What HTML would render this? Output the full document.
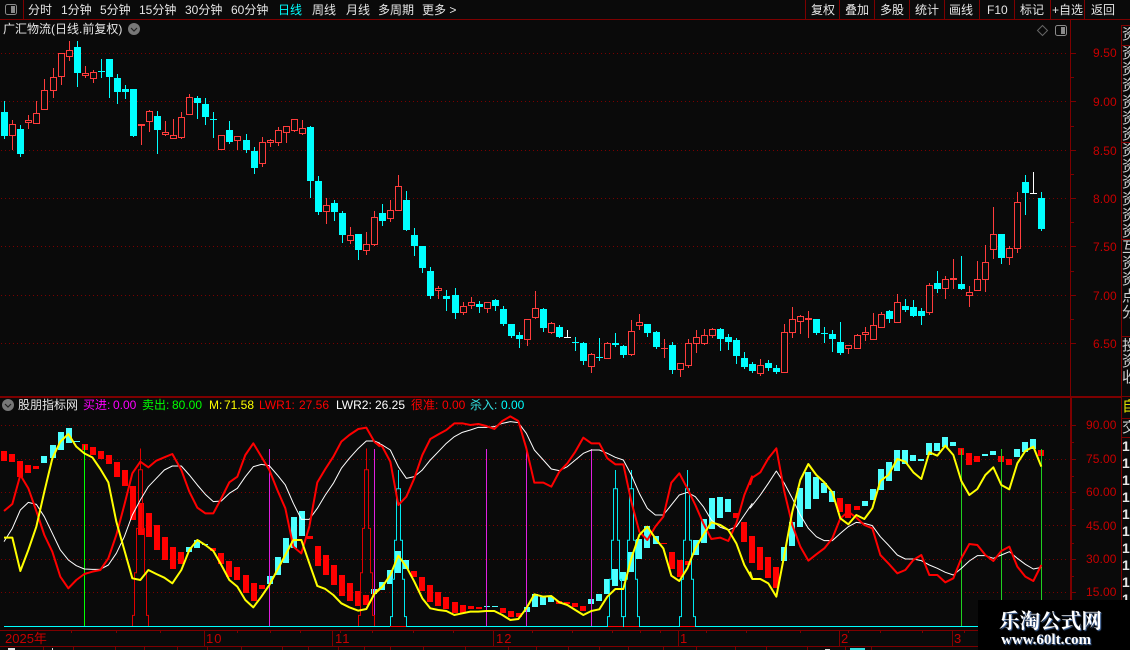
<!DOCTYPE html>
<html><head><meta charset="utf-8"><style>
html,body{margin:0;padding:0;background:#0a0a0a}
#p{position:relative;width:1130px;height:650px;overflow:hidden;background:#0a0a0a;font-family:"Liberation Sans","WenQuanYi Zen Hei","Noto Sans CJK SC",sans-serif;font-size:12px;color:#e6e6e6}
.t{position:absolute;white-space:nowrap;line-height:14px}
.a{position:absolute;white-space:nowrap;line-height:14px;left:1093px;width:30px;text-align:left;color:#c80000;font-size:12px;letter-spacing:.1px}
.l{position:absolute;background:#7d0000}
svg{position:absolute;left:0;top:0}
.s{position:absolute;left:1122px;width:8px;overflow:hidden;font-size:15px;line-height:16.2px;color:#cfcfcf;white-space:nowrap}
</style></head><body><div id="p">
<svg id="g" width="1130" height="650" viewBox="0 0 1130 650" xmlns="http://www.w3.org/2000/svg"></svg>

<svg width="1130" height="650" viewBox="0 0 1130 650" xmlns="http://www.w3.org/2000/svg" style="pointer-events:none">
<defs><clipPath id="c"><rect x="0" y="398" width="1069" height="229"/></clipPath></defs>
<g clip-path="url(#c)"><g fill="none" stroke-linejoin="round">
<g transform="translate(0,395) scale(.33333)">
<polyline stroke="#fff" stroke-width="3" points="12,440 37,400 61,345 85,322 109,328 133,365 157,415 181,465 205,495 229,512 253,522 277,523 301,523 325,510 349,475 373,425 397,360 421,315 445,275 469,250 493,225 517,213 544,213 568,240 592,270 616,298 640,320 664,318 688,295 712,280 736,245 760,215 784,208 808,212 832,240 856,270 880,325 904,373 928,373 952,340 976,300 1000,265 1024,220 1048,190 1075,160 1099,138 1123,138 1140,145"/>
<polyline stroke="#f00" stroke-width="6" points="12,348 37,327 61,240 85,280 109,348 133,420 157,470 181,545 205,580 229,555 253,537 277,530 301,525 325,490 349,420 373,330 397,235 421,200 445,217 469,197 493,187 517,177 544,225 568,290 592,338 616,355 640,355 664,310 688,262 712,245 736,180 760,145 784,185 808,225 832,285 856,340 880,455 904,475 928,395 952,262 976,222 1000,185 1024,140 1048,120 1075,102 1099,98 1123,140 1140,155"/>
<polyline stroke="#ff0" stroke-width="6" points="12,428 37,428 61,528 85,465 109,395 133,290 157,190 181,140 205,117 229,155 253,175 277,187 301,222 325,262 349,380 373,465 397,550 421,555 445,525 469,537 493,548 517,565 544,525 568,465 592,435 616,450 640,468 664,510 688,555 712,575 736,615 760,637 784,605 808,570 832,525 856,480 880,435 904,435 928,505 952,573 976,582 1000,600 1024,625 1048,637 1075,647 1099,642 1123,597 1140,582"/>
</g>
<g transform="translate(375,395) scale(.33333)">
<polyline stroke="#fff" stroke-width="3" points="0,140 22,150 46,165 70,215 94,250 118,245 142,225 166,195 190,170 214,145 238,125 262,112 286,105 310,97 334,97 358,95 382,85 406,80 430,83 454,115 478,165 505,195 529,222 553,227 577,215 601,195 625,175 649,165 673,165 697,175 721,187 745,195 769,240 793,295 817,340 841,360 865,360 889,330 913,300 937,292 961,305 985,335 1009,375 1036,397 1060,405 1084,395 1108,360 1132,325"/>
<polyline stroke="#f00" stroke-width="6" points="0,142 22,155 46,200 70,330 94,305 118,250 142,180 166,132 190,118 214,105 238,85 262,85 286,90 310,87 334,93 358,102 382,78 406,64 430,78 454,160 478,263 505,263 529,275 553,230 577,205 601,170 625,128 649,145 673,145 697,190 721,208 745,208 769,320 793,410 817,435 841,395 865,365 889,263 913,235 937,280 961,330 985,385 1009,432 1036,428 1060,438 1084,385 1108,300 1132,242"/>
<polyline stroke="#ff0" stroke-width="6" points="0,592 22,575 46,540 70,482 94,515 118,560 142,610 166,640 190,645 214,648 238,660 262,655 286,650 310,650 334,648 358,648 382,660 406,675 430,672 454,640 478,598 505,605 529,603 553,622 577,630 601,645 625,660 649,648 673,643 697,605 721,582 745,582 769,490 793,420 817,395 841,430 865,460 889,542 913,558 937,520 961,460 985,420 1009,382 1036,390 1060,405 1084,445 1108,510 1132,552"/>
</g>
<g transform="translate(750,395) scale(.33333)">
<polyline stroke="#fff" stroke-width="3" points="0,340 31,300 55,265 79,228 103,265 127,310 151,360 175,400 199,425 223,437 247,437 271,415 295,395 319,382 343,385 367,392 391,425 415,450 442,480 466,492 490,492 514,497 538,510 562,520 586,532 610,540 634,520 658,498 682,482 706,482 730,490 754,480 778,470 802,490 826,508 850,522 874,517"/>
<polyline stroke="#f00" stroke-width="6" points="0,270 7,248 31,232 55,190 79,160 103,290 127,390 151,455 175,497 199,478 223,460 247,430 271,370 295,350 319,368 343,390 367,400 391,480 415,505 442,535 466,525 490,495 514,480 538,540 562,540 586,562 610,550 634,490 658,447 682,450 706,480 730,498 754,468 778,455 802,515 826,545 850,558 874,510"/>
<polyline stroke="#ff0" stroke-width="6" points="0,530 7,552 31,552 55,565 79,605 103,480 127,350 151,255 175,207 199,240 223,262 247,292 271,370 295,388 319,360 343,372 367,340 391,258 415,240 442,192 466,200 490,232 514,252 538,172 562,182 586,152 610,180 634,258 658,300 682,282 706,240 730,217 754,270 778,283 802,205 826,168 850,155 874,215"/>
</g>
</g></g>
<!-- icons -->
<rect x="5.5" y="4.5" width="11" height="10" rx="2" fill="none" stroke="#8a8a8a"/><rect x="11" y="6" width="4" height="7" fill="#8a8a8a"/>
<circle cx="134" cy="29" r="6" fill="#777"/><path d="M131 28l3 3 3-3" fill="none" stroke="#222" stroke-width="1.2"/>
<circle cx="8" cy="405" r="6" fill="#777"/><path d="M5 404l3 3 3-3" fill="none" stroke="#222" stroke-width="1.2"/>
<path d="M1042.5 25.5l5 5-5 5-5-5z" fill="none" stroke="#666"/>
<rect x="1055.5" y="25.5" width="11" height="10" rx="2" fill="none" stroke="#8a8a8a"/><rect x="1061" y="27" width="4" height="7" fill="#8a8a8a"/>
</svg>

<!-- frame lines -->
<div class="l" style="left:0;top:19px;width:1130px;height:1px"></div>
<div class="l" style="left:23px;top:0;width:1px;height:19px"></div>
<div class="l" style="left:805px;top:0;width:1px;height:19px"></div>
<div class="l" style="left:839px;top:0;width:1px;height:19px"></div>
<div class="l" style="left:874px;top:0;width:1px;height:19px"></div>
<div class="l" style="left:909px;top:0;width:1px;height:19px"></div>
<div class="l" style="left:944px;top:0;width:1px;height:19px"></div>
<div class="l" style="left:979px;top:0;width:1px;height:19px"></div>
<div class="l" style="left:1014px;top:0;width:1px;height:19px"></div>
<div class="l" style="left:1050px;top:0;width:1px;height:19px"></div>
<div class="l" style="left:1084px;top:0;width:1px;height:19px"></div>
<div class="l" style="left:1070px;top:20px;width:1px;height:376px"></div>
<div class="l" style="left:1070px;top:397px;width:2px;height:253px"></div>
<div class="l" style="left:0;top:396px;width:1121px;height:2px"></div>
<div class="l" style="left:1121px;top:25px;width:1px;height:625px"></div>
<div class="l" style="left:0;top:630px;width:1070px;height:1px"></div>
<div class="l" style="left:0;top:646px;width:1070px;height:1px"></div>
<div class="l" style="left:1121px;top:25px;width:9px;height:1px"></div>
<div class="l" style="left:1121px;top:45px;width:9px;height:1px"></div>
<div class="l" style="left:1121px;top:142px;width:9px;height:1px"></div>
<div class="l" style="left:1121px;top:239px;width:9px;height:1px"></div>
<div class="l" style="left:1121px;top:336px;width:9px;height:1px"></div>
<div class="l" style="left:1121px;top:396px;width:9px;height:1px"></div>
<div class="l" style="left:1121px;top:418px;width:9px;height:1px"></div>
<div class="l" style="left:1121px;top:437px;width:9px;height:1px"></div>
<div class="l" style="left:204px;top:630px;width:1px;height:16px"></div>
<div class="l" style="left:332px;top:630px;width:1px;height:16px"></div>
<div class="l" style="left:493px;top:630px;width:1px;height:16px"></div>
<div class="l" style="left:678px;top:630px;width:1px;height:16px"></div>
<div class="l" style="left:839px;top:630px;width:1px;height:16px"></div>
<div class="l" style="left:952px;top:630px;width:1px;height:16px"></div>

<!-- top bar -->
<div class="t" style="left:28px;top:3px">分时</div>
<div class="t" style="left:61px;top:3px">1分钟</div>
<div class="t" style="left:100px;top:3px">5分钟</div>
<div class="t" style="left:139px;top:3px">15分钟</div>
<div class="t" style="left:185px;top:3px">30分钟</div>
<div class="t" style="left:231px;top:3px">60分钟</div>
<div class="t" style="left:278px;top:3px;color:#00ffff">日线</div>
<div class="t" style="left:312px;top:3px">周线</div>
<div class="t" style="left:346px;top:3px">月线</div>
<div class="t" style="left:378px;top:3px">多周期</div>
<div class="t" style="left:422px;top:3px">更多 &gt;</div>
<div class="t" style="left:811px;top:3px">复权</div>
<div class="t" style="left:845px;top:3px">叠加</div>
<div class="t" style="left:880px;top:3px">多股</div>
<div class="t" style="left:915px;top:3px">统计</div>
<div class="t" style="left:949px;top:3px">画线</div>
<div class="t" style="left:987px;top:3px">F10</div>
<div class="t" style="left:1020px;top:3px">标记</div>
<div class="t" style="left:1052px;top:3px">+自选</div>
<div class="t" style="left:1091px;top:3px">返回</div>

<div class="t" style="left:3px;top:22px">广汇物流(日线.前复权)</div>

<!-- price axis -->
<div class="a" style="top:46px">9.50</div>
<div class="a" style="top:95px">9.00</div>
<div class="a" style="top:144px">8.50</div>
<div class="a" style="top:192px">8.00</div>
<div class="a" style="top:240px">7.50</div>
<div class="a" style="top:289px">7.00</div>
<div class="a" style="top:337px">6.50</div>
<div class="a" style="top:418px;left:1086px">90.00</div>
<div class="a" style="top:452px;left:1086px">75.00</div>
<div class="a" style="top:485px;left:1086px">60.00</div>
<div class="a" style="top:519px;left:1086px">45.00</div>
<div class="a" style="top:552px;left:1086px">30.00</div>
<div class="a" style="top:585px;left:1086px">15.00</div>

<!-- legend -->
<div class="t" style="left:18px;top:398px">股朋指标网</div>
<div class="t" style="left:83px;top:398px;color:#ff00ff">买进:</div>
<div class="t" style="left:113px;top:398px;color:#ff00ff">0.00</div>
<div class="t" style="left:142px;top:398px;color:#00ff00">卖出:</div>
<div class="t" style="left:172px;top:398px;color:#00ff00">80.00</div>
<div class="t" style="left:209px;top:398px;color:#ffff00">M:</div>
<div class="t" style="left:224px;top:398px;color:#ffff00">71.58</div>
<div class="t" style="left:259px;top:398px;color:#ff0000">LWR1:</div>
<div class="t" style="left:299px;top:398px;color:#ff0000">27.56</div>
<div class="t" style="left:336px;top:398px;color:#fff">LWR2:</div>
<div class="t" style="left:375px;top:398px;color:#fff">26.25</div>
<div class="t" style="left:411px;top:398px;color:#ff0000">很准:</div>
<div class="t" style="left:442px;top:398px;color:#ff0000">0.00</div>
<div class="t" style="left:470px;top:398px;color:#33e0e0">杀入:</div>
<div class="t" style="left:501px;top:398px;color:#00ffff">0.00</div>

<!-- dates -->
<div class="t" style="left:5px;top:632px;color:#c80000;font-size:13px">2025年</div>
<div class="t" style="left:206px;top:632px;color:#c80000;font-size:13px;letter-spacing:1px">10</div>
<div class="t" style="left:335px;top:632px;color:#c80000;font-size:13px;letter-spacing:1px">11</div>
<div class="t" style="left:496px;top:632px;color:#c80000;font-size:13px;letter-spacing:1px">12</div>
<div class="t" style="left:680px;top:632px;color:#c80000;font-size:13px">1</div>
<div class="t" style="left:841px;top:632px;color:#c80000;font-size:13px">2</div>
<div class="t" style="left:954px;top:632px;color:#c80000;font-size:13px">3</div>

<!-- right strip -->
<div class="s" style="top:27px">资</div>
<div class="s" style="top:46px">资<br>资<br>资<br>资<br>资<br>资</div>
<div class="s" style="top:143px">资<br>资<br>资<br>资<br>资<br>资</div>
<div class="s" style="top:240px">互<br>资<br>资<br>点<br>分</div>
<div class="s" style="top:338px">投<br>资<br>收</div>
<div class="s" style="top:399px;color:#dddd00">自</div>
<div class="s" style="top:420px">交</div>
<div class="s" id="d" style="top:438px;line-height:17px;font-size:14px;font-weight:bold;color:#e8e8e8">1<br>1<br>1<br>1<br>1<br>1<br>1<br>1<br>1<br>1</div>

<!-- watermark -->
<div style="position:absolute;left:978px;top:600px;width:152px;height:50px;background:#000"></div>
<div class="t" style="left:999px;top:607px;line-height:24px;font-family:'Noto Serif CJK SC','Liberation Serif',serif;font-weight:bold;font-size:20.6px;color:#fff;text-shadow:1px 1px 1px #4a6fa8">乐淘公式网</div>
<div class="t" style="left:1001px;top:632px;line-height:16px;font-family:'Liberation Serif',serif;font-weight:bold;font-size:15px;color:#fff;text-shadow:1px 1px 1px #4a6fa8">www.60lt.com</div>
</div>
<script>
var A=[[336,408,303,413,0],[373,407,360,450,1],[387,462,376,468,0],[361,368,345,387,1],[340,371,303,371,1],[271,329,237,329,1],[232,272,205,294,1],[159,230,159,255,1],[151,170,123,183,1],[141,219,123,258,0],[220,227,198,234,1],[217,236,210,249,1],[213,215,177,232,0],[177,231,177,291,0],[234,276,222,309,0],[267,276,255,294,0],[267,408,267,408,0],[372,377,372,432,2],[334,365,331,396,1],[348,390,334,459,0],[396,404,363,408,1],[406,416,357,416,1],[351,413,336,417,1],[291,344,282,344,1],[294,309,288,354,0],[312,351,294,372,0],[357,359,336,411,0],[405,450,405,450,1],[390,426,363,429,0],[409,422,409,451,1],[420,450,402,456,0],[453,504,441,519,0],[427,491,411,501,1],[421,428,417,441,1],[390,428,381,438,1],[379,398,379,429,1],[358,392,358,396,1],[385,401,360,405,1],[381,543,378,591,0],[543,636,528,642,0],[616,637,594,672,1],[609,636,600,660,0],[639,705,633,726,0],[706,723,681,732,1],[702,750,702,777,0],[732,752,696,765,1],[651,735,633,738,1],[639,663,612,675,0],[630,657,600,665,1],[558,632,525,632,1],[600,690,573,690,0],[705,738,684,765,0],[738,804,738,816,0],[813,888,801,894,0],[864,872,858,897,1],[888,897,870,930,0],[885,939,864,954,0],[919,938,906,945,1],[907,919,891,927,1],[912,921,903,936,0],[907,928,907,939,1],[900,918,897,930,0],[927,972,918,975,0],[972,1008,972,1011,0],[1005,1017,996,1041,0],[958,1019,958,1038,1],[925,954,873,957,1],[927,984,924,993,0],[970,999,966,1002,1],[981,1011,975,1011,0]];
var B=[[351,353,330,353,3],[367,369,351,390,0],[370,423,366,432,0],[403,441,399,459,1],[412,414,354,420,0],[370,416,366,416,1],[370,375,339,378,0],[378,405,375,411,0],[333,405,300,408,1],[307,317,282,330,1],[312,339,312,348,0],[336,381,333,384,0],[384,388,357,411,2],[375,450,366,459,0],[430,451,430,471,1],[370,437,357,444,1],[352,371,330,399,1],[346,372,327,375,1],[327,347,324,354,1],[327,357,324,390,0],[351,366,342,387,0],[360,408,354,429,0],[414,441,396,444,0],[432,453,426,456,0],[436,461,417,468,1],[429,444,420,450,0],[444,456,435,459,0],[337,458,312,458,1],[298,338,261,354,1],[289,307,285,342,1],[295,299,273,351,2],[297,339,297,342,0],[339,341,321,366,0],[342,357,330,393,0],[366,399,306,402,0],[376,388,376,402,1],[346,386,342,387,1],[337,344,321,363,1],[316,359,279,359,1],[283,323,276,323,1],[273,297,270,306,0],[247,308,222,308,1],[258,270,237,273,0],[261,288,240,288,0],[273,288,264,312,0],[196,278,189,285,1],[189,207,153,216,0],[178,208,168,237,1],[175,181,117,207,1],[192,207,108,208,0],[217,227,198,261,1],[178,212,123,212,1],[127,179,75,216,1],[43,89,-39,117,1],[42,114,42,129,0],[85,113,78,135,1],[-53,86,-84,99,1],[-114,-81,-135,-18,0],[-80,-78,-144,-78,3],[-66,27,-84,30,0]];
var C=B.map(function(r){return [r[0]+660,r[1]+660,r[2]+660,r[3]+660,r[4]]});
var K=A.concat(C),s="";
function X(i){return Math.round(4.3+8.04*i)}
function rect(x,y,w,h,c){return '<rect x="'+x+'" y="'+y+'" width="'+w+'" height="'+h+'" fill="'+c+'"/>'}
function line(a,b,c,d,col,dash,sw){return '<line x1="'+a+'" y1="'+b+'" x2="'+c+'" y2="'+d+'" stroke="'+col+'"'+(dash?' stroke-dasharray="'+dash+'"':'')+(sw?' stroke-width="'+sw+'"':'')+'/>'}
var grid=[53,101,150,198,246,295,343,425,459,492,525,559,592];
grid.forEach(function(y){s+=line(1,y+.5,1067,y+.5,"#7a0000","1 3");s+=rect(1071,y,5,1,"#7d0000")});
[77,126,174,222,271,319,442,476,509,543,576].forEach(function(y){s+=rect(1071,y,3,1,"#7d0000")});
[71,116,160,237,270,300,340,372,413,453,532,572,612,640,660,706,746,800,848,880,922,964].forEach(function(x){s+=rect(x,631,1,2,"#7d0000")});
[43,73,115,144,177,207,241,282,308,338,364,390,423,465,508,536,568,599,628,663,696,735,766,807,845,871].forEach(function(x){s+=rect(x,647,1,3,"#7d0000")});
K.forEach(function(k,i){
 var x=X(i),t=Math.round(k[0]/3),b=Math.round(k[1]/3),h=Math.round(k[2]/3),l=Math.round(k[3]/3),ty=k[4];
 if(ty==0){
  s+=rect(x,h,1,l-h+1,"#00ffff");s+=rect(x-3,t,7,Math.max(b-t,1),"#00ffff");
 }else if(ty==3){
  s+=rect(x,h,1,t-h+1,"#fff");s+=rect(x-3,t,7,1,"#fff");
 }else if(ty==2){
  s+=rect(x,h,1,l-h+1,"#ff3c3c");s+=rect(x-3,t,7,Math.max(b-t,1),"#ff3c3c");
 }else{
  if(h<t)s+=rect(x,h,1,t-h,"#ff3c3c");
  if(l>b)s+=rect(x,b,1,l-b,"#ff3c3c");
  s+='<rect x="'+(x-2.5)+'" y="'+(t+.5)+'" width="6" height="'+Math.max(b-t-1,1)+'" fill="#0a0a0a" stroke="#ff3c3c"/>';
 }
});
/* indicator bars: [top, bottom, type 0 cyan / 1 red] in zoom units relative to y=395 */
var V=[[168,198,1],[177,201,1],[198,245,1],[210,234,1],[213,222,1],[183,204,0],[150,189,0],[111,165,0],[99,144,0],[138,140,0],[147,165,1],[156,180,1],[168,192,1],[180,207,1],[201,246,1],[225,273,1],[273,375,1],[324,420,1],[354,426,1],[390,465,1],[426,495,1],[456,522,1],[471,507,1],[456,471,0],[435,459,0],[447,450,0],[459,468,1],[474,507,1],[498,546,1],[516,555,1],[540,594,1],[564,618,1],[570,582,1],[543,567,0],[486,540,0],[429,504,0],[366,459,0],[348,423,0],[423,432,1],[453,513,1],[480,540,1],[510,570,1],[540,603,1],[564,618,1],[588,633,1],[600,630,1],[582,597,0],[561,585,0],[525,567,0],[468,533,0],[495,522,0],[528,546,1],[546,588,1],[570,621,1],[591,633,1],[606,642,1],[621,654,1],[630,654,1],[633,642,1],[636,642,1],[634,636,0],[634,636,0],[639,654,1],[648,666,1],[654,666,1],[636,651,0],[597,636,0],[606,630,0],[606,621,0],[618,628,1],[621,628,1],[624,636,1],[633,648,1],[612,627,0],[597,618,0],[552,597,0],[522,573,0],[531,558,0],[471,531,0],[432,492,0],[393,459,0],[423,447,0],[445,447,1],[471,522,1],[495,546,1],[498,510,1],[435,480,0],[372,444,0],[309,402,0],[306,369,0],[312,351,0],[354,369,1],[381,441,1],[423,504,1],[456,525,1],[486,549,1],[516,579,1],[456,498,0],[381,453,0],[279,396,0],[231,342,0],[246,312,0],[264,294,0],[288,322,0],[309,351,1],[327,369,1],[333,345,1],[318,333,0],[282,315,0],[222,285,0],[201,258,0],[165,228,0],[165,207,0],[180,198,0],[192,198,0],[144,180,0],[144,168,0],[126,156,0],[141,153,0],[159,180,1],[174,210,1],[183,201,1],[177,183,0],[168,180,0],[183,201,1],[192,210,1],[162,186,0],[141,171,0],[132,162,0],[165,183,1]];
V.forEach(function(v,i){var x=X(i),t=395+Math.round(v[0]/3),b=395+Math.round(v[1]/3);s+=rect(x-3,t,6,Math.max(b-t,1),v[2]?"#ff0000":"#4dffff")});
/* baseline */
s+=rect(4,626,974,1,"#00ffff");
[[390,406],[608,623],[624,639],[680,695]].forEach(function(r){s+=rect(r[0],626,r[1]-r[0],1,"#ff0000")});
/* signals */
s+=rect(84,445,1,181,"#00ff00");
[269,374,486,526,591].forEach(function(x){s+=rect(x,449,1,177,"#e020e0")});
[961,1001,1041].forEach(function(x){s+=rect(x,449,1,177,"#20d020")});
/* spikes */
function spike(cx,top,col){
 var h=626-top,o=[[8,.06],[6,.3],[4,.55],[2,.88],[0,1]],d="M"+(cx-8)+" 626";
 o.forEach(function(p,j){var y=626-h*p[1];d+="V"+y.toFixed(1);var nx=j<4?o[j+1][0]:0;if(j<4)d+="H"+(cx-nx)});
 o.slice().reverse().forEach(function(p,j,a){var y=626-h*p[1];d+="H"+(cx+p[0])+"V"+(j<4?(626-h*a[j+1][1]).toFixed(1):626)});
 return '<path d="'+d+'" fill="none" stroke="'+col+'"/>';
}
s+=spike(140.5,448.5,"#e00000");s+=spike(366.5,448.5,"#e00000");
[398.5,615.5,631.5,687.5].forEach(function(x){s+=spike(x,470,"#00e8f0")});
s+=rect(8,648,7,2,"#ddd")+rect(52,648,1,2,"#ddd")+rect(825,649,5,1,"#ddd")+rect(850,648,15,2,"#33e0e0");
document.getElementById("g").innerHTML=s;
</script>
</body></html>
